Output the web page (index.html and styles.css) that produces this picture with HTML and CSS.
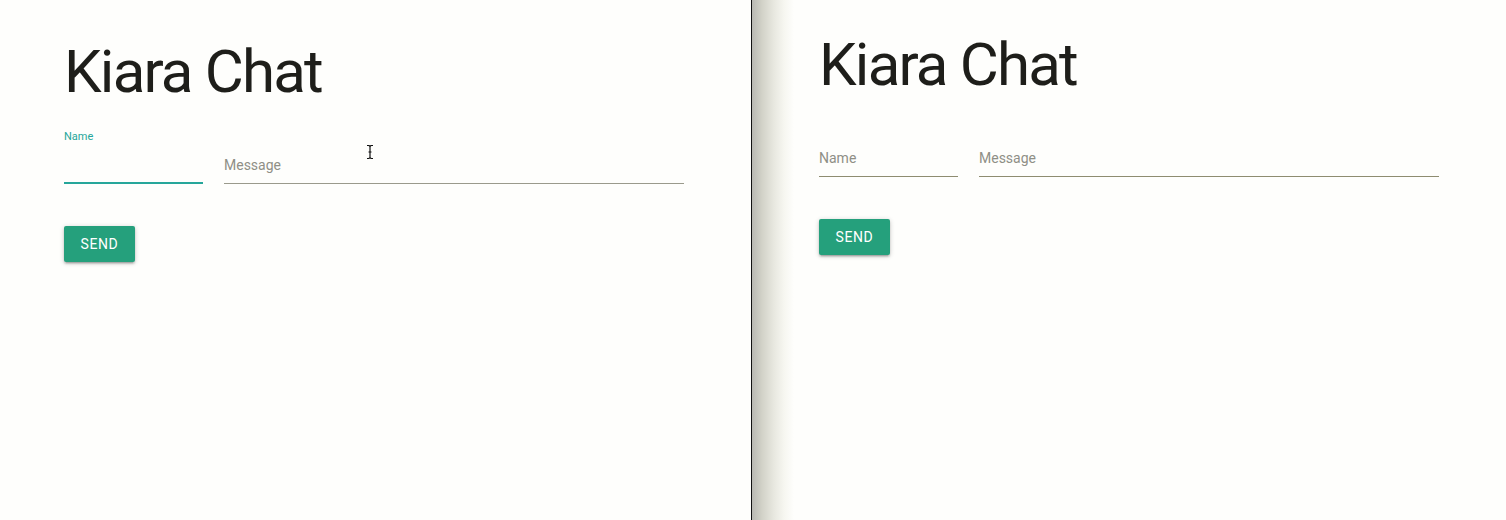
FILE: index.html
```html
<!DOCTYPE html>
<html>
<head>
<meta charset="utf-8">
<link rel="stylesheet" href="styles.css">
</head>
<body>
<div class="screen">
  <section class="pane pane-left">
    <h1 class="title">Kiara Chat</h1>
    <div class="fields">
      <div class="field field-name is-focused">
        <span class="float-label">Name</span>
      </div>
      <div class="field field-message">
        <span class="label">Message</span>
      </div>
    </div>
    <button class="send">SEND</button>
    <svg class="ibeam" width="10" height="16" viewBox="0 0 10 16">
      <path d="M2 1.5h2l1 1 1-1h2M5 2.5v11M2 14.5h2l1-1 1 1h2M3.5 8h3" fill="none" stroke="#111" stroke-width="1.2"/>
    </svg>
  </section>
  <div class="divider"></div>
  <section class="pane pane-right">
    <h1 class="title">Kiara Chat</h1>
    <div class="fields">
      <div class="field field-name">
        <span class="label">Name</span>
      </div>
      <div class="field field-message">
        <span class="label">Message</span>
      </div>
    </div>
    <button class="send">SEND</button>
  </section>
</div>
</body>
</html>
```
FILE: styles.css
```css
html, body {
  margin: 0;
  padding: 0;
  background: #fefefc;
}
body {
  width: 1506px;
  height: 520px;
  overflow: hidden;
  font-family: Roboto, "Liberation Sans", sans-serif;
}
.screen {
  display: flex;
  height: 520px;
}
.pane {
  position: relative;
  display: flex;
  flex-direction: column;
  align-items: flex-start;
}
.pane-left {
  width: 751px;
  padding: 42px 0 0 64px;
  box-sizing: border-box;
}
.divider {
  width: 1px;
  background: #111;
}
.pane-right {
  flex: 1;
  padding: 35px 0 0 67px;
  background: linear-gradient(to right, #b8b8b2 0px, #d2d2c8 10px, #e8e8e0 22px, #f6f6f0 32px, #fefefc 42px);
}
.title {
  margin: 0;
  font-size: 60px;
  line-height: 60px;
  font-weight: 400;
  color: #1e1e1a;
  letter-spacing: -1.8px;
}
.fields {
  display: flex;
  align-items: flex-end;
  gap: 21px;
  margin-top: 22px;
}
.field {
  position: relative;
  height: 60px;
  box-sizing: border-box;
  border-bottom: 1px solid #9a9a8c;
  display: flex;
  align-items: flex-end;
  padding-bottom: 8px;
}
.pane-right .field {
  border-bottom-color: #8e8c70;
}
.field-name { width: 139px; }
.field-message { width: 460px; }
.field.is-focused {
  border-bottom: 2px solid #26a69a;
  padding-bottom: 7px;
}
.label {
  font-size: 14px;
  line-height: 20px;
  color: #8f8f86;
}
.float-label {
  position: absolute;
  left: 0;
  top: 6px;
  font-size: 11px;
  line-height: 14px;
  color: #26a69a;
}
.send {
  margin-top: 42px;
  width: 71px;
  height: 36px;
  border: none;
  border-radius: 2px;
  background: #25a07c;
  color: #fff;
  font-family: Roboto, "Liberation Sans", sans-serif;
  font-size: 14px;
  font-weight: 400;
  letter-spacing: 0.6px;
  padding: 0;
  box-shadow: 0 2px 2px rgba(0,0,0,0.14), 0 3px 1px -2px rgba(0,0,0,0.12), 0 1px 5px rgba(0,0,0,0.2);
}
.ibeam {
  position: absolute;
  left: 365px;
  top: 144px;
}
```
